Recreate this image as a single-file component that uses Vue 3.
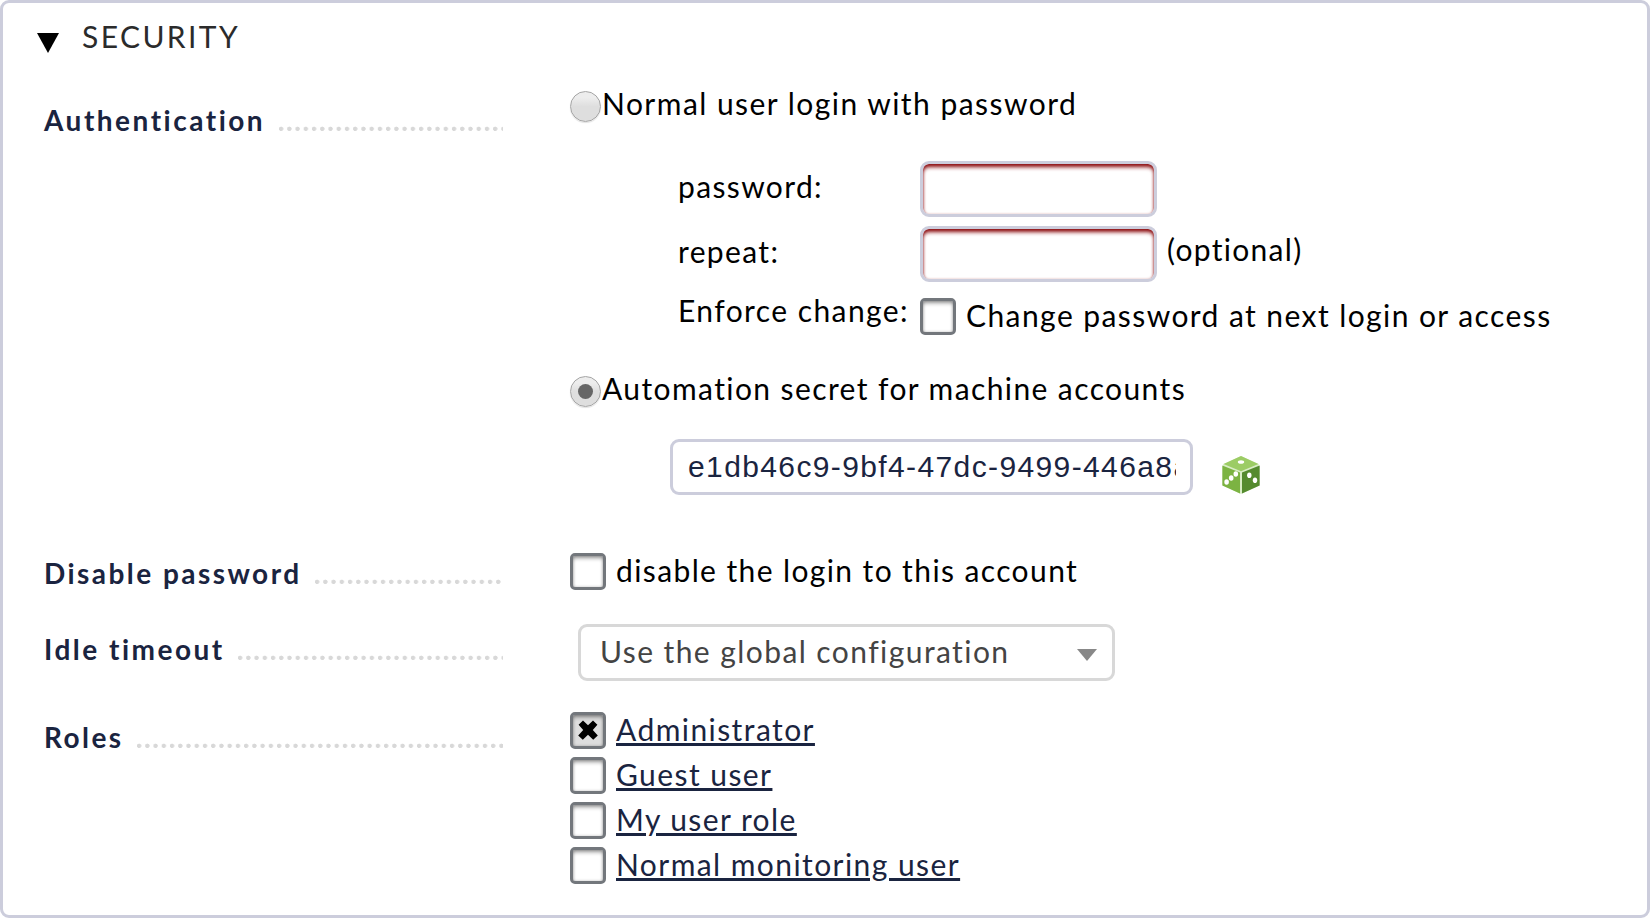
<script setup>
import { ref } from 'vue'

const method = ref('secret')
const secret = ref('e1db46c9-9bf4-47dc-9499-446a8a')
const roles = ref([
  { name: 'Administrator', on: true },
  { name: 'Guest user', on: false },
  { name: 'My user role', on: false },
  { name: 'Normal monitoring user', on: false },
])
</script>

<template>
  <section class="panel">
    <header class="head">
      <svg class="fold" width="22" height="20" viewBox="0 0 22 20"><path d="M0 0H22L11 20Z" /></svg>
      <h2 class="heading">SECURITY</h2>
    </header>

    <div class="row auth">
      <div class="label"><b class="l-auth">Authentication</b><span class="dots"></span></div>
      <div class="control">
        <label class="choice">
          <span class="radio" :class="{ on: method === 'password' }"></span><span class="login-text">Normal user login with password</span>
        </label>
        <div class="fields">
          <span class="name">password:</span>
          <input class="box invalid" type="password" />
          <span></span>
          <span class="name">repeat:</span>
          <input class="box invalid" type="password" />
          <span class="optional">(optional)</span>
        </div>
        <div class="enforce">
          <span class="name">Enforce change:</span>
          <span class="check"></span>
          <span class="enforce-text">Change password at next login or access</span>
        </div>
        <label class="choice second">
          <span class="radio" :class="{ on: method === 'secret' }"></span><span class="secret-label">Automation secret for machine accounts</span>
        </label>
        <div class="secret">
          <div class="box secret-box"><span class="secret-value">{{ secret }}</span></div>
          <svg class="dice" width="40" height="40" viewBox="0 0 40 40">
            <path d="M20 1 38 9.5V30.5L20 39 2 30.5V9.5Z" fill="#d9edc6" />
            <path d="M20 1 37.5 9 20 16.3 2.5 9Z" fill="#9ccc65" />
            <path d="M1.3 10.5 19 17.5V38.5L1.3 30.5Z" fill="#7cb342" />
            <path d="M38.7 10.5 21 17.5V38.5L38.7 30.5Z" fill="#558b2f" />
            <g fill="#fff">
              <ellipse cx="20" cy="7" rx="3.2" ry="1.8" />
              <ellipse cx="5.6" cy="27" rx="2.3" ry="2.8" />
              <ellipse cx="10.2" cy="23" rx="2.3" ry="2.8" />
              <ellipse cx="14.8" cy="19" rx="2.3" ry="2.8" />
              <ellipse cx="28.3" cy="20.2" rx="2.2" ry="2.8" />
              <ellipse cx="34" cy="25.2" rx="2.2" ry="2.8" />
            </g>
          </svg>
        </div>
      </div>
    </div>

    <div class="row disable">
      <div class="label"><b class="l-disable">Disable password</b><span class="dots"></span></div>
      <div class="control line">
        <span class="check"></span><span class="disable-text">disable the login to this account</span>
      </div>
    </div>

    <div class="row idle">
      <div class="label"><b class="l-idle">Idle timeout</b><span class="dots"></span></div>
      <div class="control">
        <div class="select">
          <span>Use the global configuration</span>
          <svg width="20" height="12" viewBox="0 0 20 12"><path d="M0 0H20L10 12Z" fill="#888" /></svg>
        </div>
      </div>
    </div>

    <div class="row roles">
      <div class="label"><b class="l-roles">Roles</b><span class="dots"></span></div>
      <div class="control">
        <div v-for="r in roles" :key="r.name" class="role">
          <span class="check" :class="{ on: r.on }" @click="r.on = !r.on">
            <svg v-if="r.on" class="cross" width="20" height="20" viewBox="0 0 20 20">
              <path d="M5 0.4 10 5.2 15 0.4 19.4 4.8 14.8 10 19.8 15.4 15.2 19.8 10 14.8 4.8 19.8 0.2 15.4 5.2 10 0.6 4.8Z" />
            </svg>
          </span>
          <a class="link">{{ r.name }}</a>
        </div>
      </div>
    </div>
  </section>
</template>

<style>
body { background: #fff; }
</style>

<style scoped>
* { box-sizing: border-box; }
.panel {
  width: 1650px;
  height: 918px;
  border: 3px solid #cccddc;
  border-radius: 9px;
  background: #fff;
  font: 30px/36px Lato, sans-serif;
  letter-spacing: 1.42px;
  color: #000;
  overflow: hidden;
  white-space: nowrap;
}
.head { display: flex; height: 77px; padding: 15px 0 0 33px; }
.fold { margin: 15px 0 0 1px; }
.heading { margin: 0 0 0 23px; font-size: 30px; font-weight: 400; letter-spacing: 2.4px; color: #2b2b2b; }
.row { display: grid; grid-template-columns: 459px 1fr; column-gap: 67px; padding-left: 41px; }
.auth { height: 460px; }
.disable { height: 75px; }
.idle { height: 90px; }
.label { display: flex; align-self: start; color: #1a2440; font-size: 28px; letter-spacing: 2.45px; }
.label b { flex: none; }
.l-auth { width: 235px; letter-spacing: 2.5px; }
.l-disable { width: 271px; }
.l-idle { width: 194px; letter-spacing: 2.5px; }
.l-roles { width: 93px; }
.dots {
  flex: 1;
  height: 5px;
  margin-top: 24px;
  background: radial-gradient(circle at 2.1px 2.8px, #d8d8d8 1.9px, transparent 2.5px) 0 0 / 8.24px 5px repeat-x;
}
.auth .label { margin-top: 22px; }
.disable .label { margin-top: 15px; }
.idle .label { margin-top: 16px; }
.roles .label { margin-top: 14px; }

.choice { display: flex; height: 76px; padding-top: 5px; }
.radio {
  width: 31px;
  height: 31px;
  margin: 6px 1px 0 0;
  border: 1px solid #a5a5a5;
  border-radius: 50%;
  background: linear-gradient(#ededed 20%, #dedede 50%);
  box-shadow: 0 1px 1px rgba(0, 0, 0, .12);
  display: grid;
  place-items: center;
}
.radio.on::after { content: ''; width: 15px; height: 15px; border-radius: 50%; background: #666; }
.login-text { letter-spacing: 1.46px; }
.secret-label { letter-spacing: 1.4px; }
.fields {
  display: grid;
  grid-template-columns: 242px 237px auto;
  grid-template-rows: 56px 56px;
  row-gap: 9px;
  margin: 5px 0 0 108px;
}
.name { padding-top: 7px; letter-spacing: 1.36px; }
.enforce .name { padding: 0; letter-spacing: 1.42px; }
.optional { padding: 5px 0 0 10px; letter-spacing: 1.3px; }
.box { width: 237px; height: 56px; border: 3px solid #cccddc; border-radius: 9px; background: #fff; padding: 0; outline: 0; }
.invalid { box-shadow: inset 0 4px 4px -1px #8e1215, inset 0 1px 3px rgba(155, 28, 31, .8); }
.enforce { display: grid; grid-template-columns: 242px 46px auto; margin: 10px 0 0 108px; height: 73px; }
.enforce .check { margin-top: 6px; }
.enforce-text { padding-top: 5px; }
.check {
  width: 36px;
  height: 37px;
  border: 3px solid #73777c;
  border-radius: 5px;
  background: #fff;
  box-shadow: inset 0 3px 4px -1px rgba(0, 0, 0, .4), inset 0 0 3px rgba(0, 0, 0, .25);
  display: grid;
  place-items: center;
  flex: none;
}
.check.on { background: #dedede; }
.cross { margin: 0 1px 1px 0; }
.second { height: 74px; }
.secret { display: flex; margin-left: 100px; }
.secret-box { width: 523px; padding: 8px 14px 0 15px; font-family: "Liberation Sans", sans-serif; line-height: 34px; letter-spacing: 1.38px; color: #1a2440; }
.secret-value { display: block; width: 488px; overflow: hidden; }
.dice { margin: 16px 0 0 28px; }
.line { display: flex; padding-top: 13px; gap: 10px; }
.disable-text { margin-top: -1px; letter-spacing: 1.39px; }
.select {
  display: flex;
  justify-content: space-between;
  width: 537px;
  height: 57px;
  margin: 9px 0 0 8px;
  padding: 6px 15px 0 19px;
  border: 3px solid #d8d8d8;
  border-radius: 9px;
  color: #444;
}
.select svg { margin-top: 16px; }
.roles .control { padding-top: 7px; }
.role { display: flex; height: 45px; gap: 10px; }
.link { color: #1a2440; letter-spacing: 1.43px; text-decoration: underline; text-decoration-thickness: 3px; text-underline-offset: 2px; height: 36px; margin-top: -1px; }
</style>
